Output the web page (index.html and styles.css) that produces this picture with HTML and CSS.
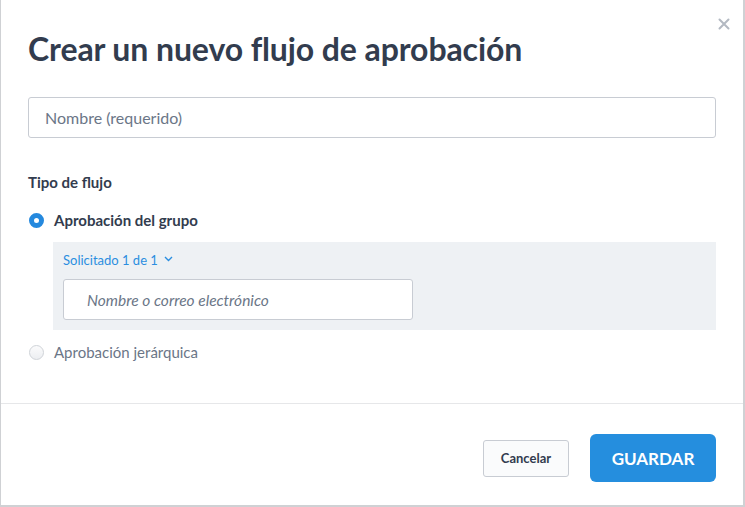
FILE: index.html
```html
<!DOCTYPE html>
<html lang="es">
<head>
<meta charset="utf-8">
<link rel="stylesheet" href="styles.css">
</head>
<body>
<div class="dialog">
  <button class="close" aria-label="Cerrar">
    <svg width="12" height="12" viewBox="0 0 12 12"><path d="M1.5 1.5 L10.5 10.5 M10.5 1.5 L1.5 10.5" stroke="#b3b9c2" stroke-width="2" stroke-linecap="round"/></svg>
  </button>
  <div class="body">
    <h1 class="title">Crear un nuevo flujo de aprobación</h1>
    <div class="field name-field">Nombre (requerido)</div>
    <div class="label">Tipo de flujo</div>
    <div class="option checked">
      <span class="radio on"></span>
      <span class="opt-text strong">Aprobación del grupo</span>
    </div>
    <div class="panel">
      <div class="requested">Solicitado 1 de 1
        <svg class="chev" width="9" height="6" viewBox="0 0 9 6"><path d="M1 1 L4.5 4.5 L8 1" fill="none" stroke="#2b8ee0" stroke-width="1.4"/></svg>
      </div>
      <div class="field person-field">Nombre o correo electrónico</div>
    </div>
    <div class="option">
      <span class="radio"></span>
      <span class="opt-text muted">Aprobación jerárquica</span>
    </div>
  </div>
  <div class="footer">
    <button class="btn cancel">Cancelar</button>
    <button class="btn save">GUARDAR</button>
  </div>
</div>
</body>
</html>
```

FILE: styles.css
```css
* { box-sizing: border-box; }
html, body { margin: 0; padding: 0; background: #fff; }
body { font-family: "Lato", "Open Sans", sans-serif; color: #323c4e; }
.dialog {
  position: relative;
  width: 745px;
  height: 507px;
  border: 1px solid #cfd1d4;
  border-top: none;
  border-right-width: 2px;
  border-bottom-width: 2px;
  display: flex;
  flex-direction: column;
}
.close {
  position: absolute;
  top: 18px;
  right: 13px;
  background: none;
  border: 0;
  padding: 0;
  width: 12px;
  height: 12px;
  display: flex;
}
.body {
  padding: 29px 27px 0 27px;
  flex: 1;
}
.title {
  margin: 0;
  font-size: 32px;
  font-weight: 700;
  line-height: 40px;
  color: #323c4e;
  letter-spacing: -0.1px;
}
.field {
  border: 1px solid #c8ccd3;
  border-radius: 3px;
  background: #fff;
  color: #6b7687;
  display: flex;
  align-items: center;
}
.name-field {
  margin-top: 28px;
  height: 41px;
  padding-left: 16px;
  font-size: 16px;
}
.label {
  margin-top: 34px;
  font-size: 15px;
  font-weight: 700;
  line-height: 20px;
}
.option {
  display: flex;
  align-items: center;
  gap: 10px;
  height: 20px;
}
.option.checked { margin-top: 18px; }
.radio {
  width: 15px;
  height: 15px;
  border-radius: 50%;
  border: 1px solid #cfd3d8;
  background: linear-gradient(#fbfbfc, #eceef1);
  margin-left: 1px;
}
.radio.on {
  border: 5px solid #2589de;
  background: #fff;
}
.opt-text { font-size: 15px; line-height: 20px; }
.opt-text.strong { font-weight: 700; color: #323c4e; }
.opt-text.muted { color: #6b7687; }
.panel {
  margin: 12px 0 12px 25px;
  background: #eef1f4;
  padding: 10px 303px 10px 10px;
  height: 88px;
}
.requested {
  font-size: 13px;
  color: #2b8ee0;
  line-height: 16px;
  display: flex;
  align-items: center;
  gap: 6px;
}
.chev { margin-top: -3px; }
.person-field {
  margin-top: 11px;
  height: 41px;
  padding-left: 23px;
  font-size: 15.5px;
  font-style: italic;
}
.footer {
  border-top: 1px solid #e6e7e9;
  height: 102px;
  display: flex;
  align-items: center;
  justify-content: flex-end;
  gap: 21px;
  padding: 7px 27px 0 0;
}
.btn {
  font-family: inherit;
  cursor: pointer;
}
.cancel {
  height: 37px;
  width: 86px;
  border: 1px solid #c8ccd3;
  border-radius: 3px;
  background: #fafbfc;
  color: #323c4e;
  font-size: 13px;
  font-weight: 700;
}
.save {
  height: 48px;
  width: 126px;
  border: 0;
  border-radius: 6px;
  background: #258ede;
  color: #fff;
  font-size: 17px;
  font-weight: 700;
  letter-spacing: 0;
}
```
